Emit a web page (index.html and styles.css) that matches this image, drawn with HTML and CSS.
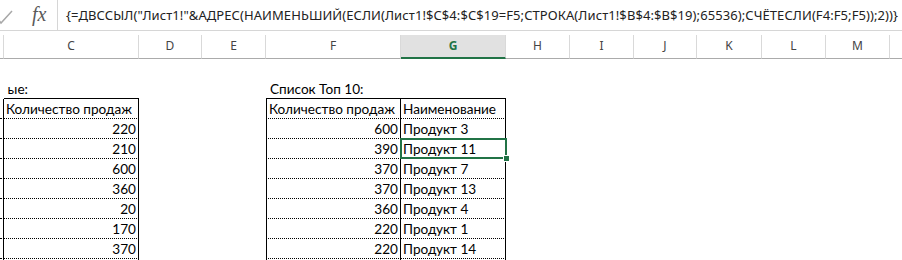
FILE: index.html
```html
<!DOCTYPE html>
<html lang="ru">
<head>
<meta charset="utf-8">
<link rel="stylesheet" href="styles.css">
</head>
<body>
<div class="app">
  <div class="formula-bar">
    <div class="fb-buttons">
      <svg class="fb-check" width="16" height="20" viewBox="0 0 16 20"><path d="M-2 13 L1 17 L12 5" fill="none" stroke="#a8a8a8" stroke-width="1.5"/></svg>
      <span class="fb-fx">fx</span>
    </div>
    <div class="fb-input">{=ДВССЫЛ("Лист1!"&amp;АДРЕС(НАИМЕНЬШИЙ(ЕСЛИ(Лист1!$C$4:$C$19=F5;СТРОКА(Лист1!$B$4:$B$19);65536);СЧЁТЕСЛИ(F4:F5;F5));2))}</div>
  </div>

  <div class="col-headers">
    <div class="ch"></div>
    <div class="ch">C</div>
    <div class="ch">D</div>
    <div class="ch">E</div>
    <div class="ch">F</div>
    <div class="ch sel">G</div>
    <div class="ch">H</div>
    <div class="ch">I</div>
    <div class="ch">J</div>
    <div class="ch">K</div>
    <div class="ch">L</div>
    <div class="ch">M</div>
    <div class="ch last"></div>
  </div>

  <div class="sheet">
    <div class="row"></div>
    <div class="row">
      <div class="c"></div>
      <div class="c top"><div class="tail"><span>ые:</span></div></div>
      <div class="c"></div>
      <div class="c"></div>
      <div class="c title top">Список Топ 10:</div>
      <div class="c top"></div>
    </div>
    <div class="row">
      <div class="c b"></div>
      <div class="c dot br">Количество продаж</div>
      <div class="c"></div>
      <div class="c"></div>
      <div class="c dot bl br">Количество продаж</div>
      <div class="c dot br">Наименование</div>
    </div>
    <div class="row">
      <div class="c b"></div>
      <div class="c dot br num">220</div>
      <div class="c"></div>
      <div class="c"></div>
      <div class="c dot bl br num">600</div>
      <div class="c dot br">Продукт 3</div>
    </div>
    <div class="row">
      <div class="c b"></div>
      <div class="c dot br num">210</div>
      <div class="c"></div>
      <div class="c"></div>
      <div class="c dot bl br num">390</div>
      <div class="c dot br">Продукт 11</div>
    </div>
    <div class="row">
      <div class="c b"></div>
      <div class="c dot br num">600</div>
      <div class="c"></div>
      <div class="c"></div>
      <div class="c dot bl br num">370</div>
      <div class="c dot br">Продукт 7</div>
    </div>
    <div class="row">
      <div class="c b"></div>
      <div class="c dot br num">360</div>
      <div class="c"></div>
      <div class="c"></div>
      <div class="c dot bl br num">370</div>
      <div class="c dot br">Продукт 13</div>
    </div>
    <div class="row">
      <div class="c b"></div>
      <div class="c dot br num">20</div>
      <div class="c"></div>
      <div class="c"></div>
      <div class="c dot bl br num">360</div>
      <div class="c dot br">Продукт 4</div>
    </div>
    <div class="row">
      <div class="c b"></div>
      <div class="c dot br num">170</div>
      <div class="c"></div>
      <div class="c"></div>
      <div class="c dot bl br num">220</div>
      <div class="c dot br">Продукт 1</div>
    </div>
    <div class="row">
      <div class="c b"></div>
      <div class="c dot br num">370</div>
      <div class="c"></div>
      <div class="c"></div>
      <div class="c dot bl br num">220</div>
      <div class="c dot br">Продукт 14</div>
    </div>
    <div class="row row-cut">
      <div class="c b-only"></div>
      <div class="c br"></div>
      <div class="c"></div>
      <div class="c"></div>
      <div class="c bl br"></div>
      <div class="c br"></div>
    </div>

    <div class="selection"><div class="handle"></div></div>
  </div>
</div>
</body>
</html>
```

FILE: styles.css
```css
* { box-sizing: border-box; margin: 0; padding: 0; }

html, body {
  width: 902px;
  height: 260px;
  overflow: hidden;
  background: #fff;
}

body {
  font-family: Lato, "Noto Sans", sans-serif;
  color: #000;
}

.app {
  --cols: 4px 135px 63px 64px 135px 105px 64px 64px 63px 65px 64px 64px 12px;
  width: 902px;
  height: 260px;
  overflow: hidden;
}

/* formula bar */
.formula-bar {
  display: flex;
  height: 31px;
  border-bottom: 1px solid #d6d6d6;
}

.fb-buttons {
  width: 58px;
  flex: none;
  display: flex;
  align-items: center;
  border-right: 1px solid #d6d6d6;
}

.fb-check {
  display: block;
  margin-top: 2px;
}

.fb-fx {
  margin-left: 16px;
  font-family: "Liberation Serif", serif;
  font-style: italic;
  font-size: 20px;
  color: #5a5a5a;
  line-height: 1;
  margin-bottom: 2px;
}

.fb-input {
  flex: 1;
  padding-left: 8px;
  font-family: "Noto Sans", sans-serif;
  font-size: 13px;
  letter-spacing: 0.08px;
  line-height: 30px;
  color: #222;
  white-space: nowrap;
  overflow: hidden;
}

/* column headers */
.col-headers {
  display: grid;
  grid-template-columns: var(--cols);
  height: 24px;
  margin-top: 4px;
}

.ch {
  border-right: 1px solid #d9d9d9;
  border-bottom: 1px solid #ababab;
  text-align: center;
  font-family: "Noto Sans", sans-serif;
  font-size: 12px;
  line-height: 22px;
  color: #444;
}

.ch.sel {
  background: #e1e1e1;
  color: #217346;
  font-weight: bold;
  border-bottom: 2px solid #217346;
}

.ch.last { border-right: none; }

/* sheet */
.sheet {
  position: relative;
}

.row {
  display: grid;
  grid-template-columns: var(--cols);
  height: 20px;
}

.row-cut { height: 4px; }
.row-cut .c { height: 4px; }

.c {
  height: 20px;
  font-size: 13.6px;
  line-height: 20px;
  white-space: nowrap;
  padding: 0 2px;
  overflow: visible;
}

.c.title { padding-left: 4px; }

.tail {
  width: 24px;
  display: flex;
  justify-content: flex-end;
  margin-left: -2px;
}

.tail span { flex: none; }

.top { border-bottom: 1px solid #000; }
.dot { border-bottom: 1px dotted #000; }
.b { border-bottom: 1px dotted #000; border-right: 1px solid #000; padding: 0; }
.b-only { border-right: 1px solid #000; padding: 0; }
.br { border-right: 1px solid #000; }
.bl { border-left: 1px solid #000; }
.num { text-align: right; }

.selection {
  position: absolute;
  left: 400px;
  top: 79px;
  width: 107px;
  height: 21px;
  border: 2px solid #217346;
}

.handle {
  position: absolute;
  right: -5px;
  bottom: -5px;
  width: 7px;
  height: 7px;
  background: #217346;
  border: 1px solid #fff;
}
```
